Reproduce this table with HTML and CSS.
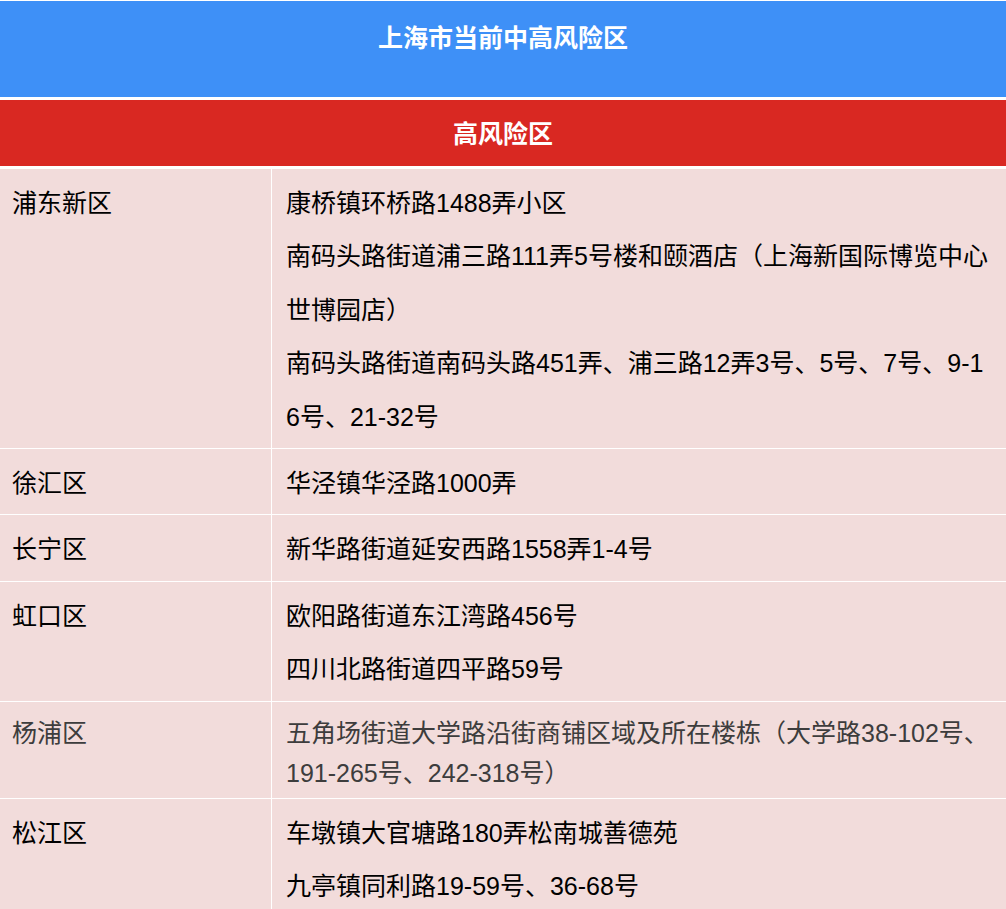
FILE: index.html
```html
<!DOCTYPE html>
<html lang="zh-CN">
<head>
<meta charset="utf-8">
<title>上海市当前中高风险区</title>
<link rel="stylesheet" href="styles.css">
</head>
<body>
<div class="page">
  <div class="title-bar">上海市当前中高风险区</div>
  <div class="level-bar">高风险区</div>
  <table class="areas">
    <colgroup><col class="col-district"><col class="col-places"></colgroup>
    <tbody>
      <tr>
        <td class="district">浦东新区</td>
        <td class="places">
          <p>康桥镇环桥路1488弄小区</p>
          <p>南码头路街道浦三路111弄5号楼和颐酒店（上海新国际博览中心世博园店）</p>
          <p>南码头路街道南码头路451弄、浦三路12弄3号、5号、7号、9-16号、21-32号</p>
        </td>
      </tr>
      <tr>
        <td class="district">徐汇区</td>
        <td class="places"><p>华泾镇华泾路1000弄</p></td>
      </tr>
      <tr>
        <td class="district">长宁区</td>
        <td class="places"><p>新华路街道延安西路1558弄1-4号</p></td>
      </tr>
      <tr>
        <td class="district">虹口区</td>
        <td class="places">
          <p>欧阳路街道东江湾路456号</p>
          <p>四川北路街道四平路59号</p>
        </td>
      </tr>
      <tr class="muted">
        <td class="district">杨浦区</td>
        <td class="places"><p>五角场街道大学路沿街商铺区域及所在楼栋（大学路38-102号、191-265号、242-318号）</p></td>
      </tr>
      <tr>
        <td class="district">松江区</td>
        <td class="places">
          <p>车墩镇大官塘路180弄松南城善德苑</p>
          <p>九亭镇同利路19-59号、36-68号</p>
        </td>
      </tr>
    </tbody>
  </table>
</div>
</body>
</html>
```

FILE: styles.css
```css
html, body {
  margin: 0;
  padding: 0;
  background: #ffffff;
}

body {
  font-family: "Liberation Sans", "Noto Sans CJK SC", sans-serif;
  color: #000000;
}

.page {
  padding-top: 1px;
  display: flex;
  flex-direction: column;
}

.title-bar {
  height: 96px;
  box-sizing: border-box;
  padding-top: 12px;
  background: #3e90f7;
  color: #ffffff;
  font-weight: bold;
  font-size: 25px;
  line-height: 50px;
  text-align: center;
}

.level-bar {
  margin-top: 3px;
  height: 66px;
  background: #d92822;
  color: #ffffff;
  font-weight: bold;
  font-size: 25px;
  line-height: 68px;
  text-align: center;
}

.areas {
  margin-top: 3px;
  width: 100%;
  table-layout: fixed;
  border-collapse: separate;
  border-spacing: 0;
  background: #f2dcdb;
}

.col-district {
  width: 272px;
}

.areas td {
  vertical-align: top;
  font-size: 25px;
  line-height: 53.4px;
  padding: 8px 0 4px;
  border-bottom: 1px solid #ffffff;
}

.areas td.district {
  padding-left: 12px;
  border-right: 1px solid #ffffff;
}

.areas td.places {
  padding-left: 14px;
  padding-right: 12px;
  word-break: break-all;
}

.places p {
  margin: 0;
}

.areas tr.muted td {
  color: #3d3d3d;
  line-height: 40px;
  padding-top: 11px;
  padding-bottom: 5px;
  word-break: normal;
}
```
